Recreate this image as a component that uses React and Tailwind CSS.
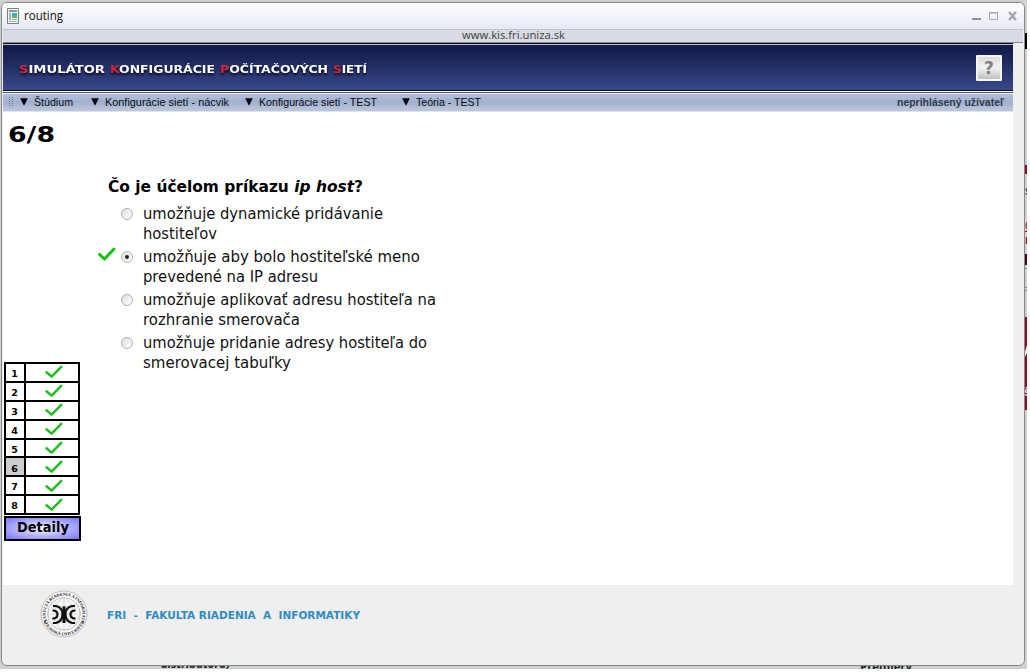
import React from 'react';

const menu = [
  { label: 'Štúdium', left: 'ml-[6px]', w: 39, cell: 'w-[40px]' },
  { label: 'Konfigurácie sietí - nácvik', left: 'ml-[17px]', w: 124, cell: 'w-[126px]' },
  { label: 'Konfigurácie sietí - TEST', left: 'ml-[14px]', w: 118, cell: 'w-[121px]' },
  { label: 'Teória - TEST', left: 'ml-[22px]', w: 65, cell: 'w-[68px]' },
];

const answers = [
  { lines: [['umožňuje dynamické pridávanie', 240], ['hostiteľov', 74]], checked: false },
  { lines: [['umožňuje aby bolo hostiteľské meno', 277], ['prevedené na IP adresu', 175]], checked: true },
  { lines: [['umožňuje aplikovať adresu hostiteľa na', 293], ['rozhranie smerovača', 157]], checked: false },
  { lines: [['umožňuje pridanie adresy hostiteľa do', 284], ['smerovacej tabuľky', 148]], checked: false },
];

const title = [
  ['S', 'IMULÁTOR', 86],
  ['K', 'ONFIGURÁCIE', 105],
  ['P', 'OČÍTAČOVÝCH', 108],
  ['S', 'IETÍ', 34],
];

function Fit({ children, width, size, className = '', height = 20, baseline = 15, adjust = 'spacingAndGlyphs', ...rest }) {
  return (
    <svg width={width} height={height} className={`block shrink-0 overflow-visible ${className}`}>
      <text x="0" y={baseline} fontSize={size} textLength={width} lengthAdjust={adjust} {...rest}>
        {children}
      </text>
    </svg>
  );
}

function Check({ className = '' }) {
  return (
    <svg width="18" height="14" viewBox="0 0 18 14" className={className} fill="none">
      <path d="M1.5 7.2 L6.6 11.6 L16.2 1.8" stroke="#1fbd1f" strokeWidth="2.5" strokeLinecap="round" strokeLinejoin="round" />
    </svg>
  );
}

function BoldCheck() {
  return (
    <svg width="18" height="15" viewBox="0 0 18 15" fill="none">
      <path d="M1.6 7.4 L6.4 12 L16 2" stroke="#12c412" strokeWidth="3" strokeLinecap="round" />
    </svg>
  );
}

function Radio({ checked }) {
  return (
    <span className={`flex size-[12px] shrink-0 items-center justify-center rounded-full border bg-gradient-to-br from-[#dedede] to-white ${checked ? 'border-[#a9c49f]' : 'border-[#b0b0b0]'}`}>
      {checked && <span className="size-[4px] rounded-full bg-[#222]" />}
    </span>
  );
}

function Seal() {
  return (
    <svg width="48" height="48" viewBox="0 0 48 48" fill="none" className="overflow-visible">
      <defs>
        <path id="sealTop" d="M7 31 A18.4 18.4 0 1 1 41 31" />
        <path id="sealBottom" d="M4.4 33 A21.6 21.6 0 0 0 43.6 33" />
      </defs>
      <circle cx="24" cy="24" r="23" fill="#fafafa" stroke="#a5a5a5" strokeWidth=".7" />
      <circle cx="24" cy="24" r="16.4" fill="#f7f7f7" stroke="#aaa" strokeWidth=".7" />
      <g stroke="#c4c4c4" strokeWidth=".6">
        <ellipse cx="24" cy="24" rx="9" ry="16" />
        <ellipse cx="24" cy="24" rx="16" ry="8" />
        <path d="M24 8V40M8 24H40M11 14Q24 20 37 14M11 34Q24 28 37 34" />
      </g>
      <g fontFamily="Liberation Serif, serif" fontSize="4.3" fontWeight="bold" fill="#222">
        <text><textPath href="#sealTop">FAKULTA RIADENIA A INFORMATIKY</textPath></text>
        <text><textPath href="#sealBottom" startOffset="50%" textAnchor="middle">ŽILINSKÁ UNIVERZITA</textPath></text>
      </g>
      <circle cx="5" cy="32" r=".9" fill="#222" />
      <circle cx="43" cy="32" r=".9" fill="#222" />
      <g stroke="#111" strokeWidth="2.2">
        <path d="M13 16H16Q22.5 17.5 22.5 24.3T16 33H13" />
        <path d="M35 16H32Q25.5 17.5 25.5 24.3T32 33H35" />
        <path d="M12.5 20.5Q17.5 20.5 17.5 24.4T12.5 28.6" />
        <path d="M35.5 20.5Q30.5 20.5 30.5 24.4T35.5 28.6" />
      </g>
      <path d="M24 16.5V33" stroke="#111" strokeWidth="3" />
    </svg>
  );
}

export default function App() {
  return (
    <div className="h-[672px] w-[1030px] overflow-hidden bg-white">
      <div className="relative h-[669px] w-[1027px] overflow-hidden bg-[#cecfd0]">
        <div className="absolute top-0 right-0 flex h-[669px] w-[4px] flex-col bg-[#d2d2d4]">
          <span className="mt-[33px] h-[16px] bg-black" />
          <span className="mt-[116px] h-[9px] bg-[#8b0a1c]" />
          <span className="h-[42px] pt-[10px] pl-[2px] font-['Liberation_Sans'] text-[12px] leading-[14px] text-[#222]">s</span>
          <span className="h-[14px] pl-[2px] font-['Liberation_Sans'] text-[12px] leading-[20px] text-[#a01530] underline">O</span>
          <span className="h-[24px] pl-[2px] font-['Liberation_Sans'] text-[12px] leading-[20px] font-bold text-[#a01530]">r</span>
          <span className="h-[11px] bg-[#4a0508]" />
          <span className="mt-[3px] h-px bg-[#888]" />
          <span className="mt-[18px] h-px bg-[#888]" />
          <span className="mt-[2px] h-px bg-[#888]" />
          <span className="mt-[26px] flex h-[93px] flex-col bg-[#8d0a20] pl-px">
            <svg width="3" height="14" viewBox="0 0 3 14" className="mt-[28px] shrink-0"><path d="M0 14L3 8V0L0 10Z" fill="#eee" /></svg>
            <span className="mt-[26px] font-['Liberation_Sans'] text-[12px] leading-[14px] font-bold text-[#f0dfe2]">š</span>
          </span>
        </div>
        <div className="absolute top-[656px] left-[161px]">
          <Fit width={69} size={12} height={16} baseline={12} fontWeight="bold" fontStyle="italic" fontFamily="Open Sans, sans-serif" fill="#222">distribútora)</Fit>
        </div>
        <div className="absolute top-[659px] left-[860px]">
          <Fit width={52} size={12} height={16} baseline={12} fontWeight="bold" fontFamily="Open Sans, sans-serif" fill="#222">Premiéry</Fit>
        </div>

        <div className="absolute top-[2px] left-px flex h-[664px] w-[1024px] flex-col overflow-hidden rounded-[6px] border border-[#85878a] bg-[#efefef]">
          <header className="flex h-[26px] shrink-0 items-center bg-gradient-to-b from-white to-[#e5e9f5] pr-[6px] pl-[5px]">
            <svg width="12" height="16" viewBox="0 0 12 16" className="shrink-0">
              <path d="M.5 .5H11.5V15.5H.5Z" fill="#f4f7f6" stroke="#75817e" />
              <path d="M2 2H10V4H2Z" fill="#8b9995" />
              <path d="M2 5H4V12H2Z" fill="#a8b3b0" />
              <path d="M5 5H10V8H5Z" fill="#35b5b5" />
              <path d="M5 8H10V10H5Z" fill="#5fb84f" />
              <path d="M5 11.5H10M2 13.5H10" stroke="#a8b3b0" />
            </svg>
            <Fit className="ml-[5px]" width={39} size={12.5} height={16} baseline={12} fontFamily="Open Sans, sans-serif" fill="#111">routing</Fit>
            <svg width="46" height="12" viewBox="0 0 46 12" className="ml-auto" fill="none">
              <path d="M0 9H9" stroke="#8d8f94" strokeWidth="2" />
              <path d="M17.5 2.5H25.5V9.5H17.5ZM17 3H26" stroke="#a5a7ac" />
              <path d="M37 2L44 10M44 2L37 10" stroke="#a0a2a6" strokeWidth="2.2" />
            </svg>
          </header>
          <div className="mx-px flex h-[14px] shrink-0 justify-center border-t border-b border-t-[#bfc3ca] border-b-[#858990] bg-[#d8dbe2]">
            <Fit width={103} size={11.5} height={12} baseline={9} fontFamily="Open Sans, sans-serif" fill="#3c3e44">www.kis.fri.uniza.sk</Fit>
          </div>

          <main className="ml-px flex h-[542px] w-[1010px] shrink-0 flex-col bg-white">
            <div className="flex h-[48px] shrink-0 items-center border-t border-b border-[#060a1c] bg-gradient-to-b from-[#101745] to-[#38498a] pt-px pr-[11px] pl-[16px] shadow-[inset_0_1px_0_#b9c0d4]">
              <h1 className="flex gap-[5px]">
                {title.map(([a, b, w], i) => (
                  <Fit key={i} width={w} size={11.3} height={16} baseline={13} fontFamily="DejaVu Sans, sans-serif" fontWeight="bold" className="[filter:drop-shadow(0_2px_1px_#050820)]">
                    <tspan fill="#d1273c">{a}</tspan>
                    <tspan fill="#fff">{b}</tspan>
                  </Fit>
                ))}
              </h1>
              <button className="ml-auto flex size-[26px] items-center justify-center rounded-[1px] border-2 border-[#f5f6fa] bg-gradient-to-b from-[#dedede] via-[#f2f2f2] to-[#c0c0c0] font-['DejaVu_Sans'] text-[17px] leading-[20px] font-bold text-[#808080]">?</button>
            </div>
            <nav className="mt-px flex h-[20px] shrink-0 items-center border-t border-b border-t-[#4c5268] border-b-[#dfe4ee] bg-gradient-to-b from-[#b7c3da] via-[#a0b0cd] to-[#bdc8dd] pr-[9px] pl-[5px] shadow-[inset_0_1px_0_#e6eaf3]">
              <svg width="6" height="10" viewBox="0 0 6 10" className="shrink-0">
                <path d="M1.5 0V10M4.5 0V10" stroke="#63708f" strokeDasharray="1 1" />
              </svg>
              {menu.map((m) => (
                <div key={m.label} className={`flex items-center ${m.left}`}>
                  <svg width="8" height="8" viewBox="0 0 8 8" className="shrink-0"><path d="M.2 .3H7.8L4.2 7.4H3.8Z" fill="#05070c" /></svg>
                  <span className={`ml-[6px] ${m.cell}`}>
                    <Fit width={m.w} size={11} height={16} baseline={12} fontFamily="Liberation Sans, sans-serif" fill="#080b14">{m.label}</Fit>
                  </span>
                </div>
              ))}
              <span className="ml-auto">
                <Fit width={107} size={10.5} height={16} baseline={12} fontFamily="Liberation Sans, sans-serif" fontWeight="bold" fill="#30394b">neprihlásený užívateľ</Fit>
              </span>
            </nav>

            <div className="pt-[10px] pl-[5px]">
              <Fit width={47} size={22} height={26} baseline={20} fontFamily="DejaVu Sans, sans-serif" fontWeight="bold">6/8</Fit>
            </div>
            <section className="mt-[28px] flex flex-col pl-[94px]">
              <h2 className="h-[27px] pl-[11px]">
                <Fit width={255} size={16} height={24} baseline={16} fontFamily="DejaVu Sans, sans-serif" fontWeight="bold">Čo je účelom príkazu <tspan fontStyle="italic">ip host</tspan>?</Fit>
              </h2>
              {answers.map((a) => (
                <div key={a.lines[0][0]} className="flex h-[43px]">
                  <div className="w-[24px] pt-px pl-px">{a.checked && <BoldCheck />}</div>
                  <div className="w-[22px] pt-[5px]"><Radio checked={a.checked} /></div>
                  <div>
                    {a.lines.map(([t, w]) => (
                      <Fit key={t} width={w} size={15} height={20} baseline={16} fontFamily="DejaVu Sans, sans-serif" fill="#111">{t}</Fit>
                    ))}
                  </div>
                </div>
              ))}
            </section>
            <aside className="-mt-[13px] ml-px w-[77px]">
              <div className="grid h-[153px] w-[76px] grid-rows-8 gap-[2px] border-2 border-black bg-black">
                {[1, 2, 3, 4, 5, 6, 7, 8].map((n) => (
                  <div key={n} className="flex min-h-0 gap-[2px]">
                    <span className={`flex w-[18px] items-center justify-center pt-[3px] pr-px font-['DejaVu_Sans'] text-[9.5px] leading-none font-bold ${n === 6 ? 'bg-[#cccccc]' : 'bg-white'}`}>{n}</span>
                    <span className="flex flex-1 items-center justify-center bg-white pl-[4px]"><Check /></span>
                  </div>
                ))}
              </div>
              <button className="mt-px flex h-[25px] w-[77px] justify-center border-2 border-black bg-[radial-gradient(ellipse_at_center,#ffffff_0%,#b4b4ff_50%,#7777ff_100%)]">
                <Fit width={52} size={14} height={20} baseline={14} fontFamily="DejaVu Sans, sans-serif" fontWeight="bold">Detaily</Fit>
              </button>
            </aside>
          </main>
          <footer className="flex pt-[5px] pl-[38px]">
            <Seal />
            <div className="pt-[16px] pl-[19px]">
              <Fit width={253} size={10} height={16} baseline={13} fontFamily="DejaVu Sans, sans-serif" fontWeight="bold" fill="#2e8bc4" xmlSpace="preserve">{'FRI  -  FAKULTA RIADENIA  A  INFORMATIKY'}</Fit>
            </div>
          </footer>
        </div>
      </div>
    </div>
  );
}
